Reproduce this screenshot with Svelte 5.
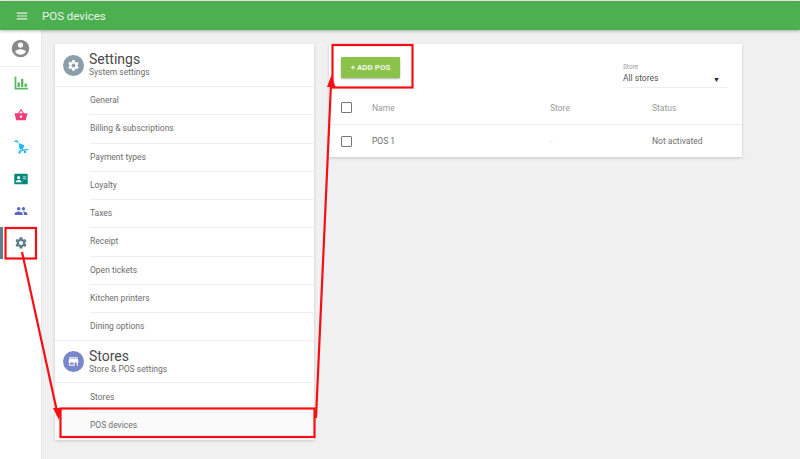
<script lang="ts">
  const settingsItems = [
    'General',
    'Billing & subscriptions',
    'Payment types',
    'Loyalty',
    'Taxes',
    'Receipt',
    'Open tickets',
    'Kitchen printers',
    'Dining options'
  ];
  const gear =
    'M19.14 12.94c.04-.3.06-.61.06-.94s-.02-.64-.07-.94l2.03-1.58a.49.49 0 0 0 .12-.61l-1.92-3.32a.49.49 0 0 0-.59-.22l-2.39.96c-.5-.38-1.03-.7-1.62-.94l-.36-2.54A.48.48 0 0 0 13.92 2h-3.84a.48.48 0 0 0-.48.41l-.36 2.54c-.59.24-1.13.57-1.62.94l-2.39-.96a.48.48 0 0 0-.59.22L2.72 8.87a.48.48 0 0 0 .12.61l2.03 1.58c-.05.3-.09.63-.09.94s.02.64.07.94l-2.03 1.58a.49.49 0 0 0-.12.61l1.92 3.32c.12.22.37.29.59.22l2.39-.96c.5.38 1.03.7 1.62.94l.36 2.54c.05.24.24.41.48.41h3.84c.24 0 .44-.17.47-.41l.36-2.54c.59-.24 1.13-.56 1.62-.94l2.39.96c.22.08.47 0 .59-.22l1.92-3.32a.48.48 0 0 0-.12-.61l-2.01-1.58zM12 15.6A3.6 3.6 0 1 1 12 8.4a3.6 3.6 0 0 1 0 7.2z';
</script>

<div class="page">
  <header class="topbar">
    <svg class="menu" viewBox="0 0 24 24"><path d="M3 18h18v-2H3v2zm0-5h18v-2H3v2zm0-7v2h18V6H3z" /></svg>
    <span class="title">POS devices</span>
  </header>

  <div class="body">
    <nav class="sidebar">
      <div class="avatar-row">
        <svg viewBox="0 0 24 24" class="icon-avatar"><path d="M12 2a10 10 0 1 0 0 20 10 10 0 0 0 0-20zm0 3a3 3 0 1 1 0 6 3 3 0 0 1 0-6zm0 14.2a7.2 7.2 0 0 1-6-3.22c.03-1.99 4-3.08 6-3.08s5.97 1.09 6 3.08a7.2 7.2 0 0 1-6 3.22z" /></svg>
      </div>
      <div class="nav-item">
        <svg viewBox="0 0 24 24" style="fill:#5cb860"><path d="M1 1h3v19h20v3H1zM6 11h4v8H6zM12 5h4v14h-4zM18 13h4v6h-4z" /></svg>
      </div>
      <div class="nav-item">
        <svg viewBox="0 0 24 24" style="fill:#ec407a"><path d="M17.210 9l-4.380-6.560a1 1 0 0 0-1.660 0L6.790 9H2a1 1 0 0 0-1 1.270l2.540 9.270A2 2 0 0 0 5.500 21h13a2 2 0 0 0 1.930-1.460L23 10.270A1 1 0 0 0 22 9h-4.790zM9 9l3-4.400L15 9H9zm3 8a2 2 0 1 1 0-4 2 2 0 0 1 0 4z" /></svg>
      </div>
      <div class="nav-item">
        <svg viewBox="0 0 24 24" style="fill:#29b6f6"><path d="M0 1.500L5 0l3 4-1.800 1.200L4 2.800 1 3.500zM8 5l10 4-3.500 8L9 14.500zM9.500 17.500L24 15v2l-13 2.500a2.200 2.200 0 1 1-3.500 1zM19 18.500a2.200 2.200 0 1 1 0 4.400 2.200 2.200 0 0 1 0-4.400z" /></svg>
      </div>
      <div class="nav-item">
        <svg viewBox="0 0 24 24" style="fill:#00897b"><path d="M2 3h20a1.500 1.500 0 0 1 1.500 1.500v15A1.500 1.500 0 0 1 22 21H2a1.500 1.500 0 0 1-1.500-1.500v-15A1.500 1.500 0 0 1 2 3zm6 4a2.700 2.700 0 1 0 0 5.400A2.700 2.700 0 0 0 8 7zM3 17.500h10v-1.200c0-1.800-3.300-2.800-5-2.800s-5 1-5 2.800v1.200zM15 7.500V9h6V7.500h-6zm0 3.500v1.500h6V11h-6z" /></svg>
      </div>
      <div class="nav-item">
        <svg viewBox="0 0 24 24" style="fill:#5c6bc0"><path d="M16 11a3 3 0 1 0 0-6 3 3 0 0 0 0 6zm-8 0a3 3 0 1 0 0-6 3 3 0 0 0 0 6zm0 2c-2.330 0-7 1.170-7 3.500V19h14v-2.500C15 14.170 10.330 13 8 13zm8 0c-.29 0-.62.02-.97.05 1.160.84 1.970 1.970 1.970 3.450V19h6v-2.500c0-2.330-4.670-3.500-7-3.500z" /></svg>
      </div>
      <div class="nav-item active">
        <svg viewBox="0 0 24 24" style="fill:#607d8b"><path d={gear} /></svg>
      </div>
    </nav>

    <main class="content">
      <section class="card settings">
        <div class="group-head">
          <span class="badge gear"><svg viewBox="0 0 24 24"><path d={gear} /></svg></span>
          <div class="head-text">
            <div class="head-title">Settings</div>
            <div class="head-sub">System settings</div>
          </div>
        </div>
        <ul class="first">
          {#each settingsItems as item}
            <li>{item}</li>
          {/each}
        </ul>
        <div class="group-head stores-head">
          <span class="badge store">
            <svg viewBox="0 0 24 24"><path d="M20 4H4v2h16V4zm1 10v-2l-1-5H4l-1 5v2h1v6h10v-6h4v6h2v-6h1zm-9 4H6v-4h6v4z" /></svg>
          </span>
          <div class="head-text">
            <div class="head-title">Stores</div>
            <div class="head-sub">Store &amp; POS settings</div>
          </div>
        </div>
        <ul>
          <li>Stores</li>
          <li class="current">POS devices</li>
        </ul>
      </section>

      <section class="card devices">
        <div class="toolbar">
          <button class="add">+ ADD POS</button>
          <div class="store-select">
            <div class="select-label">Store</div>
            <div class="select-value">All stores<span class="caret">▼</span></div>
          </div>
        </div>
        <div class="row head">
          <span class="check"></span>
          <span class="c-name">Name</span>
          <span class="c-store">Store</span>
          <span class="c-status">Status</span>
        </div>
        <div class="row">
          <span class="check"></span>
          <span class="c-name">POS 1</span>
          <span class="c-store faint">-</span>
          <span class="c-status">Not activated</span>
        </div>
      </section>
    </main>
  </div>

  <!-- annotations drawn on top of the screenshot -->
  <svg class="marks" viewBox="0 0 800 459">
    <g fill="none" stroke="#f50f14" stroke-width="2.200">
      <rect x="5.500" y="228" width="30.500" height="30.500" />
      <rect x="60.500" y="408.500" width="254" height="28.500" />
      <rect x="332.500" y="45" width="80" height="42.500" />
      <path d="M22 252 L58 416" />
      <path d="M316 418 L331 84" />
    </g>
    <path d="M53 408 L62 408 L59 420 Z" fill="#f50f14" />
    <path d="M331.500 75 L327 87 L335.500 87 Z" fill="#f50f14" />
  </svg>
</div>

<style>
  :global(body) {
    margin: 0;
    font-family: Roboto, 'Liberation Sans', sans-serif;
  }

  .page {
    position: relative;
    width: 800px;
    height: 459px;
    overflow: hidden;
    background: #f0f0f0;
    padding-top: 1px;
    box-sizing: border-box;
  }

  .topbar {
    height: 29px;
    background: #4caf50;
    display: flex;
    align-items: center;
    padding-left: 15px;
    box-shadow: 0 1px 3px rgba(0, 0, 0, 0.3);
    position: relative;
    color: #e8f5e9;
  }

  .menu {
    width: 14px;
    height: 14px;
    fill: #e8f5e9;
  }

  .title {
    margin-left: 13px;
    font-size: 11.500px;
    font-weight: 400;
  }

  .body {
    display: flex;
    height: 429px;
  }

  .sidebar {
    width: 42px;
    background: #fff;
    flex: none;
    box-sizing: border-box;
    border-right: 1px solid #e8e8e8;
  }

  .avatar-row {
    height: 36px;
    display: flex;
    align-items: center;
    justify-content: center;
    border-bottom: 1px solid #eee;
  }

  .icon-avatar {
    width: 21px;
    height: 21px;
    fill: #8a8a8a;
  }

  .nav-item {
    height: 32px;
    display: flex;
    align-items: center;
    justify-content: center;
    position: relative;
  }

  .nav-item svg {
    width: 14px;
    height: 14px;
  }

  .nav-item.active::before {
    content: '';
    position: absolute;
    left: 0;
    top: 0;
    bottom: 0;
    width: 3px;
    background: #607d8b;
  }

  .content {
    display: flex;
    align-items: flex-start;
    gap: 15px;
    padding: 14px 0 0 13px;
  }

  .card {
    background: #fff;
    box-shadow: 0 1px 3px rgba(0, 0, 0, 0.16);
  }

  .settings {
    width: 259px;
    height: 396px;
  }

  .group-head {
    height: 43px;
    display: flex;
    align-items: center;
    box-sizing: border-box;
    border-bottom: 1px solid #eee;
    padding-left: 8px;
  }

  .stores-head {
    border-top: 1px solid #eee;
  }

  .badge {
    width: 21px;
    height: 21px;
    border-radius: 50%;
    display: flex;
    align-items: center;
    justify-content: center;
    flex: none;
  }

  .badge svg {
    width: 13px;
    height: 13px;
    fill: #fff;
  }

  .gear {
    background: #8a9faa;
  }

  .store {
    background: #7986cb;
  }

  .head-text {
    margin-left: 5px;
    color: #555;
  }

  .head-title {
    font-size: 14px;
    line-height: 15px;
    color: #4a4a4a;
  }

  .head-sub {
    font-size: 8.500px;
    line-height: 11px;
    color: #6e6e6e;
  }

  ul {
    list-style: none;
    margin: 0;
    padding: 0;
  }

  li {
    height: 28.250px;
    line-height: 28px;
    font-size: 8.500px;
    color: #6e6e6e;
    padding-left: 35px;
    position: relative;
    box-sizing: border-box;
  }

  .first li:first-child {
    height: 27.250px;
    line-height: 27px;
  }

  li + li::before {
    content: '';
    position: absolute;
    left: 35px;
    right: 0;
    top: 0;
    border-top: 1px solid #eee;
  }

  li.current {
    background: #fafafa;
    line-height: 27px;
  }

  .devices {
    width: 413px;
    height: 113px;
  }

  .toolbar {
    height: 47px;
    position: relative;
    display: flex;
    justify-content: space-between;
    padding: 13px 15px 0 12px;
    box-sizing: border-box;
  }

  .add {
    width: 59px;
    height: 21px;
    border: none;
    padding: 0;
    border-radius: 1px;
    background: #8bc34a;
    color: #f1f8e9;
    font-family: inherit;
    font-weight: 700;
    font-size: 8px;
    box-shadow: 0 1px 2px rgba(0, 0, 0, 0.3);
  }

  .store-select {
    width: 104px;
    margin-top: 6px;
    height: 26px;
  }

  .select-label {
    font-size: 6.500px;
    line-height: 8px;
    color: #999;
  }

  .select-value {
    font-size: 8.500px;
    line-height: 14px;
    color: #555;
    border-bottom: 1px solid #eee;
    padding-bottom: 2px;
    position: relative;
  }

  .caret {
    position: absolute;
    right: 7px;
    top: 2px;
    font-size: 7px;
    color: #222;
  }

  .row {
    height: 32px;
    display: flex;
    align-items: center;
    font-size: 8.500px;
    color: #6e6e6e;
    padding-left: 12px;
    box-sizing: border-box;
  }

  .row.head {
    height: 34px;
    border-bottom: 1px solid #eee;
    color: #999;
  }

  .check {
    width: 9px;
    height: 9px;
    border: 1px solid #777;
    border-radius: 1px;
    flex: none;
  }

  .c-name {
    margin-left: 20px;
    width: 178px;
  }

  .c-store {
    width: 102px;
  }

  .faint {
    color: #ddd;
  }

  .marks {
    position: absolute;
    left: 0;
    top: 0;
    width: 800px;
    height: 459px;
    pointer-events: none;
  }
</style>
